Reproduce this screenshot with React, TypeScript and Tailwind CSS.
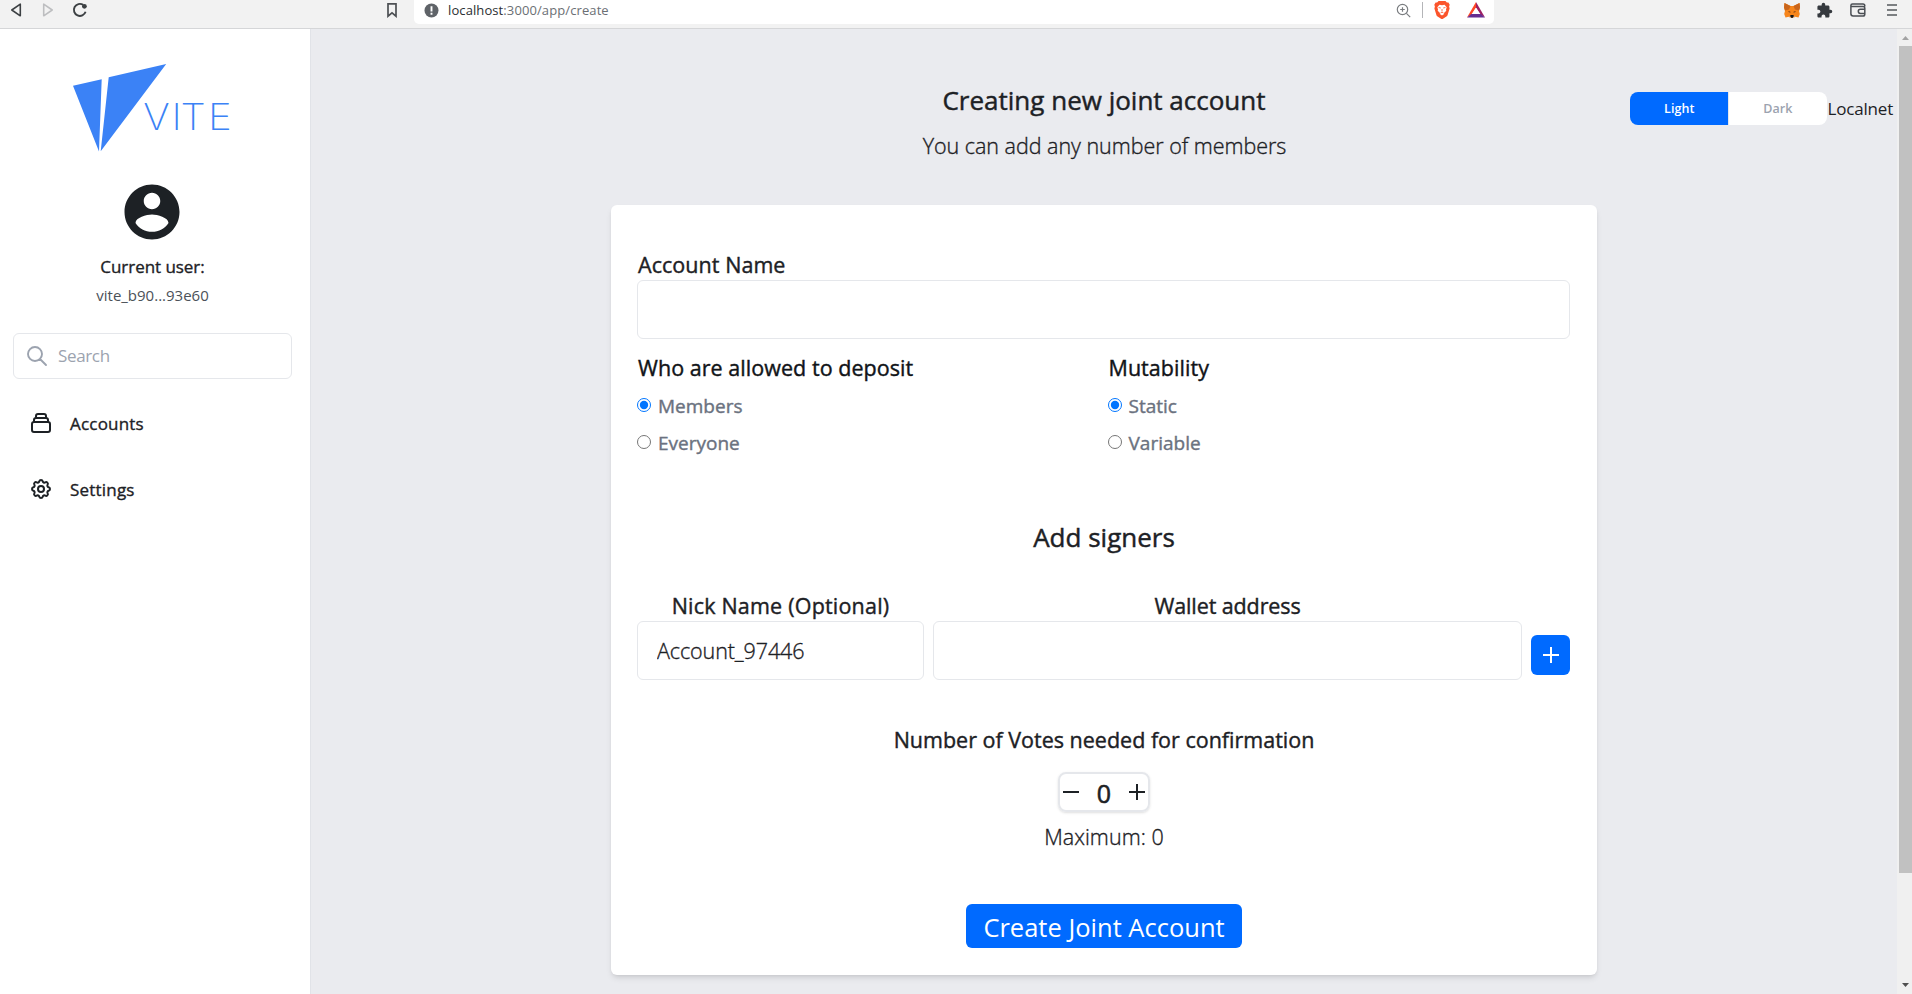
import React from "react";
import { MdExtension } from "react-icons/md";

function BrowserBar() {
  return (
    <header className="flex h-[29px] shrink-0 items-start border-b border-[#d5d6d8] bg-[#f2f2f2]">
      <div className="flex h-5 w-[414px] items-center">
        <svg className="ml-[10px] h-4 w-3" viewBox="0 0 12 16" fill="none" stroke="#3c4043" strokeWidth="1.6" strokeLinejoin="round">
          <path d="M10.3 2.2v11.6L1.8 8z" />
        </svg>
        <svg className="ml-5 h-4 w-3" viewBox="0 0 12 16" fill="none" stroke="#bdbec0" strokeWidth="1.6" strokeLinejoin="round">
          <path d="M1.7 2.2v11.6L10.2 8z" />
        </svg>
        <svg className="ml-[18px] h-4 w-4" viewBox="0 0 16 16" fill="none" stroke="#3c4043" strokeWidth="1.9">
          <path d="M13.6 9.8A6 6 0 1 1 11.2 2.9" />
          <circle cx="12.4" cy="4.3" r="2.4" fill="#3c4043" stroke="none" />
        </svg>
        <svg className="ml-[298px] h-4 w-3" viewBox="0 0 12 16" fill="none" stroke="#4d5054" strokeWidth="1.7">
          <path d="M2 1.8h8v12.4l-4-3.4-4 3.4z" />
        </svg>
      </div>
      <div className="flex h-6 w-[1080px] items-start rounded-b-[5px] bg-white">
        <div className="flex h-5 flex-1 items-center">
          <svg className="ml-[10px] h-[15px] w-[15px]" viewBox="0 0 15 15">
            <circle cx="7.5" cy="7.5" r="7" fill="#5f6368" />
            <path d="M7.5 3.2v5.2M7.5 9.8v1.9" stroke="#fff" strokeWidth="1.9" />
          </svg>
          <p className="ml-[9px] text-[13px] leading-5 tracking-[0.1px] text-[#6b6f74]">
            <span className="text-[#2b2e33]">localhost</span>:3000/app/create
          </p>
        </div>
        <div className="flex h-5 items-center">
          <svg className="h-[15px] w-[15px]" viewBox="0 0 15 15" fill="none" stroke="#7a7d81" strokeWidth="1.2">
            <circle cx="6.5" cy="6.5" r="5.2" />
            <path d="M10.4 10.4l3.8 3.8M4.2 6.5h4.6M6.5 4.2v4.6" />
          </svg>
          <span className="ml-[11px] h-4 w-px bg-[#b4b5b8]" />
          <svg className="ml-[11px] h-[18px] w-4" viewBox="0 0 16 18">
            <path d="M4.6 0h6.8l1.5 1.6 1.5-.1 1.3 2.2-.6 1.7.5 2-2 6.6q-.3 1-1.2 1.6L8.6 18H7.4L3.6 15.6Q2.7 15 2.4 14L.4 7.4l.5-2L.3 3.7 1.6 1.5l1.5.1z" fill="#fb542b" />
            <path d="M8 4.200l2.500-.5 2.200 2.500-.7 2.200.3 1.400-2.300 2.100.2 1L8 14.600 5.800 12.900l.2-1L3.700 9.800l.3-1.400-.7-2.200 2.200-2.500z" fill="#fff" />
            <path d="M4.600 6.500l2.200.5M11.400 6.500l-2.200.5M8 8v2.500M6.500 12l1.500-.8 1.500.8" stroke="#fb542b" strokeWidth=".8" fill="none" />
          </svg>
          <svg className="ml-[17px] mr-[9px] h-4 w-[18px]" viewBox="0 0 18 16">
            <path d="M9 0v5.500L4.200 12.800 0 15.500z" fill="#ff4724" />
            <path d="M9 0l9 15.500-4.200-2.700L9 5.500z" fill="#9e1f63" />
            <path d="M0 15.500l4.200-3.600h9.600l4.200 3.600z" fill="#662d91" />
            <path d="M9 5.700l3.900 6.300H5.100z" fill="#fff" />
          </svg>
        </div>
      </div>
      <div className="flex h-5 flex-1 items-center justify-end pr-[15px]">
        <svg className="h-[15px] w-4" viewBox="0 0 16 15">
          <path d="M.5 0L6.500 3h3L15.500 0 16 4.500 15 8l.8 3-1.300 3.500-3.500-.8L9.500 15h-3L5 13.700l-3.500.8L.2 11 1 8 0 4.500z" fill="#f6851b" />
          <path d="M.5 0l6 3L5 6.500 1 7.500 0 4.500zM15.500 0l-6 3L11 6.500l4 1 1-3z" fill="#c9651b" />
          <path d="M4.500 8l2 .8-.2 1-1.800-.8zM11.500 8l-2 .8.2 1 1.800-.8z" fill="#763e1a" />
          <path d="M6.500 12h3l.4 1.500-.9 1.300H7l-.9-1.300z" fill="#161616" />
          <path d="M5 13.700l1.500-.2.600 1.500h-.6zM11 13.700l-1.500-.2-.6 1.500h.6z" fill="#d7c1b3" />
        </svg>
        <MdExtension className="ml-4 h-[17px] w-[17px] text-[#35393e]" />
        <svg className="ml-[17px] h-[14px] w-4" viewBox="0 0 16 14" fill="none" stroke="#4b4f54" strokeWidth="1.5">
          <path d="M14.800 3.500V2.800q0-1.800-1.800-1.800H2.500Q.9 1 .9 2.600v8.200q0 2.200 2.200 2.200h9.900q1.800 0 1.800-1.800v-6q0-1.700-1.700-1.700H2.300Q.9 3.500.9 2.400M15 6.200h-4.600a2 2 0 0 0 0 4.200H15" />
        </svg>
        <svg className="ml-[21px] h-3 w-[10px]" viewBox="0 0 10 12" stroke="#55595e" strokeWidth="1.700">
          <path d="M0 1h10M0 6h10M0 11h10" />
        </svg>
      </div>
    </header>
  );
}

function Logo() {
  return (
    <svg className="mt-[33px] mr-[2px] h-[92px] w-[164px]" viewBox="70 62 164 92" fill="#3b82f6">
      <path d="M73 85.700L101.700 79.300 99 151.600zM108.700 77.300L166.200 64 100.700 151.300z" />
      <text
        x="0 25.200 33.300 57.800"
        y="0"
        fontSize="36"
        transform="translate(143.300 129.800) scale(1.120 1)"
        className="font-['Inter',sans-serif] font-extralight"
      >
        VITE
      </text>
    </svg>
  );
}

function NavItem({ label, children }: { label: string; children: React.ReactNode }) {
  return (
    <a className="flex h-[46px] items-center pl-4 text-[17px] tracking-[0.2px] [-webkit-text-stroke:0.35px]">
      <svg className="h-6 w-6" viewBox="0 0 24 24" fill="none" stroke="currentColor" strokeWidth="2" strokeLinecap="round" strokeLinejoin="round">
        {children}
      </svg>
      <span className="ml-[17px] pt-[2px]">{label}</span>
    </a>
  );
}

function Sidebar() {
  return (
    <aside className="flex w-[311px] shrink-0 flex-col border-r border-[#e1e3e8] bg-white pl-[13px] pr-[18px]">
      <div className="flex flex-col items-center">
        <Logo />
        <svg className="mt-[25px] mr-px h-[66px] w-[66px]" viewBox="0 0 24 24" fill="#1d2125">
          <path d="M12 2C6.480 2 2 6.480 2 12s4.480 10 10 10 10-4.480 10-10S17.520 2 12 2zm0 3c1.660 0 3 1.340 3 3s-1.340 3-3 3-3-1.340-3-3 1.340-3 3-3zm0 14.200c-2.500 0-4.710-1.280-6-3.220.03-1.990 4-3.080 6-3.080 1.990 0 5.970 1.090 6 3.080-1.290 1.940-3.500 3.220-6 3.220z" />
        </svg>
        <p className="mt-[10px] text-[17px] leading-6 tracking-[-0.05px] [-webkit-text-stroke:0.35px]">Current user:</p>
        <p className="mt-[6px] text-[15px] leading-5 text-[#4b5158]">vite_b90...93e60</p>
      </div>
      <div className="mt-7 flex h-[46px] items-center rounded-[6px] border border-[#e5e7eb] pl-[11px]">
        <svg className="h-6 w-6" viewBox="0 0 24 24" fill="none" stroke="#9ca3af" strokeWidth="1.900" strokeLinecap="round">
          <path d="M21 21L15 15M17 10C17 13.866 13.866 17 10 17S3 13.866 3 10 6.134 3 10 3s7 3.134 7 7z" />
        </svg>
        <span className="ml-[9px] text-[17px] tracking-[-0.35px] text-[#9ca3af]">Search</span>
      </div>
      <nav className="mt-[21px] flex flex-col gap-5">
        <NavItem label="Accounts">
          <path d="M19 11H5m14 0a2 2 0 012 2v6a2 2 0 01-2 2H5a2 2 0 01-2-2v-6a2 2 0 012-2m14 0V9a2 2 0 00-2-2M5 11V9a2 2 0 012-2m0 0V5a2 2 0 012-2h6a2 2 0 012 2v2M7 7h10" />
        </NavItem>
        <NavItem label="Settings">
          <path d="M10.325 4.317c.426-1.756 2.924-1.756 3.350 0a1.724 1.724 0 002.573 1.066c1.543-.94 3.310.826 2.370 2.370a1.724 1.724 0 001.065 2.572c1.756.426 1.756 2.924 0 3.350a1.724 1.724 0 00-1.066 2.573c.94 1.543-.826 3.310-2.370 2.370a1.724 1.724 0 00-2.572 1.065c-.426 1.756-2.924 1.756-3.350 0a1.724 1.724 0 00-2.573-1.066c-1.543.94-3.310-.826-2.370-2.370a1.724 1.724 0 00-1.065-2.572c-1.756-.426-1.756-2.924 0-3.350a1.724 1.724 0 001.066-2.573c-.94-1.543.826-3.310 2.370-2.370.996.608 2.296.07 2.572-1.065z" />
          <path d="M15 12a3 3 0 11-6 0 3 3 0 016 0z" />
        </NavItem>
      </nav>
    </aside>
  );
}

function RadioGroup({ title, name, options }: { title: string; name: string; options: string[] }) {
  return (
    <fieldset>
      <legend className="pl-px pt-px text-[21.5px] leading-8 tracking-[0.05px] text-[#111418] [-webkit-text-stroke:0.4px]">{title}</legend>
      <div className="pt-[3px]">
        {options.map((option, i) => (
          <label key={option} className="flex h-[37px] items-center text-[19px] leading-[37px] text-[#6b7280] [-webkit-text-stroke:0.4px]">
            <input type="radio" name={name} defaultChecked={i === 0} className="mr-[7px] mb-[2px] h-[14px] w-[14px]" />
            <span className="pt-[2px]">{option}</span>
          </label>
        ))}
      </div>
    </fieldset>
  );
}

const field = "h-[59px] w-full rounded-[6px] border border-[#e5e7eb] bg-white px-[19px] text-[21.5px] font-light tracking-[-0.1px] [-webkit-text-stroke:0.35px]";

function AccountForm() {
  return (
    <section className="flex h-[770px] w-[986px] flex-col rounded-[6px] bg-white pl-[26px] pr-[27px] pt-[43px] shadow-md">
      <label className="block h-8 pl-px pt-px text-[21.5px] leading-8 tracking-[0.05px] [-webkit-text-stroke:0.4px]">Account Name</label>
      <input className={field} />
      <div className="mt-3 grid grid-cols-2 gap-2">
        <RadioGroup title="Who are allowed to deposit" name="deposit" options={["Members", "Everyone"]} />
        <RadioGroup title="Mutability" name="mutability" options={["Static", "Variable"]} />
      </div>
      <h2 className="mt-[58px] pl-px text-center text-[26px] leading-9 [-webkit-text-stroke:0.45px]">Add signers</h2>
      <div className="mt-[34px] grid grid-cols-[287px_589px_39px] items-end gap-[9px]">
        <div className="text-center">
          <label className="block h-8 pt-px text-[21.5px] leading-8 tracking-[0.2px] [-webkit-text-stroke:0.4px]">Nick Name (Optional)</label>
          <input className={field} defaultValue="Account_97446" />
        </div>
        <div className="text-center">
          <label className="block h-8 pt-px text-[21.5px] leading-8 tracking-[-0.1px] [-webkit-text-stroke:0.4px]">Wallet address</label>
          <input className={field} />
        </div>
        <button className="mb-[5px] flex h-10 items-center justify-center rounded-[6px] bg-[#006aff]">
          <svg className="h-4 w-4" viewBox="0 0 16 16" stroke="#fff" strokeWidth="2">
            <path d="M0 8h16M8 0v16" />
          </svg>
        </button>
      </div>
      <div className="mt-11 flex flex-col items-center pl-px">
        <p className="text-[21.5px] leading-8 [-webkit-text-stroke:0.4px]">Number of Votes needed for confirmation</p>
        <div className="mt-4 flex h-10 w-[92px] items-center justify-between rounded-[8px] border-2 border-[#e5e7eb] px-[3px] shadow">
          <svg className="h-4 w-4" viewBox="0 0 16 16" stroke="currentColor" strokeWidth="2">
            <path d="M0 8h16" />
          </svg>
          <span className="pt-[2px] text-[25px] leading-8 [-webkit-text-stroke:0.6px]">0</span>
          <svg className="h-4 w-4" viewBox="0 0 16 16" stroke="currentColor" strokeWidth="2">
            <path d="M0 8h16M8 0v16" />
          </svg>
        </div>
        <p className="mt-[9px] text-[21.5px] font-light leading-8 tracking-[0.05px] [-webkit-text-stroke:0.35px]">Maximum: 0</p>
        <button className="mt-[51px] flex h-11 w-[276px] items-center justify-center rounded-[6px] bg-[#006aff] pt-[2px] text-[25.5px] text-white">
          Create Joint Account
        </button>
      </div>
    </section>
  );
}

function Scrollbar() {
  return (
    <div className="flex w-[15px] shrink-0 flex-col items-end justify-between bg-[#f0f0f0]">
      <div className="flex h-[17px] w-[13px] items-center justify-center">
        <svg className="h-1 w-[7px]" viewBox="0 0 7 4" fill="#a3a3a3">
          <path d="M0 4l3.500-4L7 4z" />
        </svg>
      </div>
      <div className="h-[827px] w-[13px] bg-[#c1c1c1]" />
      <div className="flex w-[13px] flex-1 items-end justify-center pb-[7px]">
        <svg className="h-1 w-[7px]" viewBox="0 0 7 4" fill="#505050">
          <path d="M0 0l3.500 4L7 0z" />
        </svg>
      </div>
    </div>
  );
}

export default function App() {
  return (
    <div className="flex h-[994px] w-[1912px] flex-col overflow-hidden font-['Open_Sans',sans-serif] text-[#1d2125]">
      <BrowserBar />
      <div className="flex min-h-0 flex-1">
        <Sidebar />
        <main className="flex flex-1 flex-col items-center bg-[#eaebef] pt-[53px]">
          <div className="flex w-full items-start">
            <div className="flex-1 pl-1" />
            <div className="flex flex-col items-center">
              <h1 className="text-[26px] leading-9 [-webkit-text-stroke:0.45px]">Creating new joint account</h1>
              <p className="mt-3 pl-px text-[21.5px] font-light leading-8 tracking-[-0.03px] [-webkit-text-stroke:0.35px]">
                You can add any number of members
              </p>
            </div>
            <div className="flex flex-1 items-center justify-end pr-1 pt-[10px]">
              <div className="flex h-[33px] w-[197px] overflow-hidden rounded-[8px] text-[12.5px] font-semibold">
                <span className="flex flex-1 items-center justify-center bg-[#006aff] pt-[2px] pl-px tracking-[0.1px] text-white">Light</span>
                <span className="flex flex-1 items-center justify-center border-l border-[#e5e7eb] bg-white pt-[2px] text-[#9ca3af]">Dark</span>
              </div>
              <span className="pl-px text-[17px] leading-8 tracking-[-0.2px]">Localnet</span>
            </div>
          </div>
          <div className="pt-[43px]">
            <AccountForm />
          </div>
        </main>
        <Scrollbar />
      </div>
    </div>
  );
}
